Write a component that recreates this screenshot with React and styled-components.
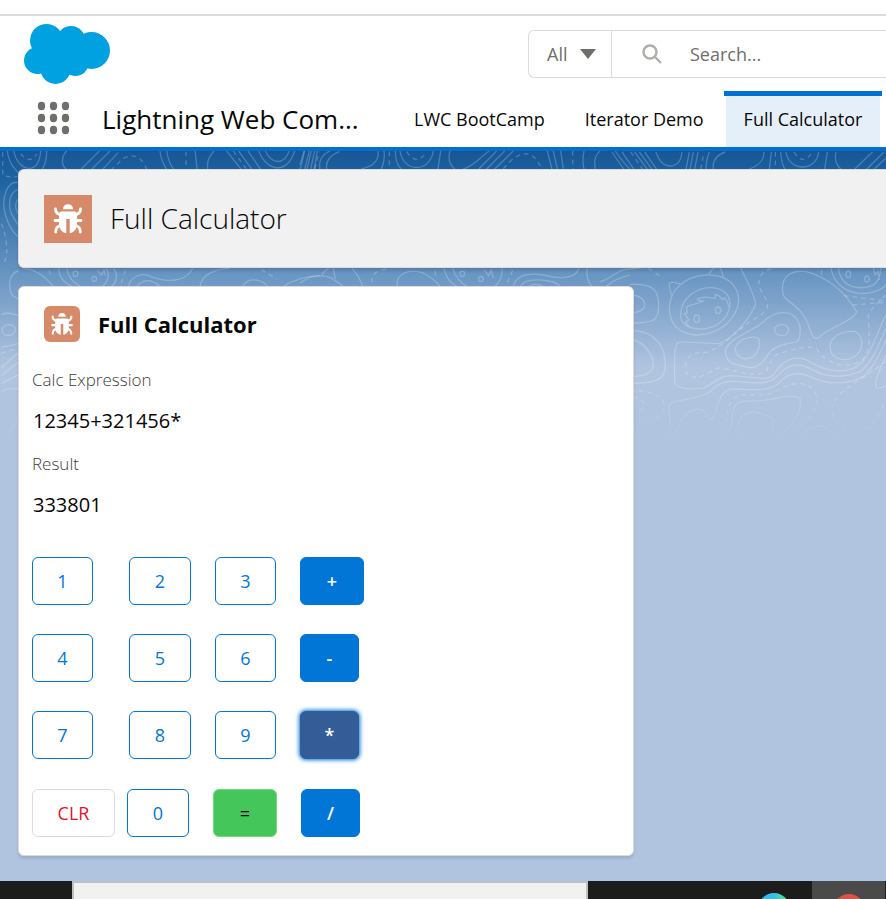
import React, { useState } from "react";
import styled, { createGlobalStyle, css } from "styled-components";

const GlobalStyle = createGlobalStyle`
  *, *::before, *::after { box-sizing: border-box; }
  body {
    margin: 0;
    background: #fff;
    color: #080707;
    font-family: "Open Sans", "Noto Sans", sans-serif;
    font-size: 18px;
  }
  h1, h2 { margin: 0; }
  button, input, select { font: inherit; }
`;

const Page = styled.div`
  display: flex;
  flex-direction: column;
  min-height: 100vh;
  overflow: hidden;
`;

const Header = styled.header`
  margin-top: 14px;
  border-top: 2px solid #dddbda;
  background: #fff;
`;

const TopRow = styled.div`
  display: flex;
  align-items: flex-start;
  justify-content: space-between;
  height: 75px;
  padding-left: 24px;
`;

const Logo = styled.svg`
  flex: none;
  width: 86px;
  height: 60px;
  margin-top: 8px;
  fill: #00a1e0;
`;

const SearchBox = styled.form`
  display: flex;
  width: 358px;
  height: 48px;
  margin-top: 14px;
  border: 1px solid #dddbda;
  border-right: 0;
  border-radius: 6px 0 0 6px;
  color: #706e6b;
`;

const ScopeField = styled.label`
  display: grid;
  flex: none;
  align-items: center;
  width: 83px;
  border-right: 1px solid #dddbda;

  > * {
    grid-area: 1 / 1;
  }
`;

const ScopeSelect = styled.select`
  appearance: none;
  width: 100%;
  height: 100%;
  padding: 0 0 0 18px;
  border: 0;
  background: transparent;
  color: inherit;
`;

const Caret = styled.svg`
  justify-self: end;
  width: 16px;
  height: 10px;
  margin-right: 15px;
  fill: #706e6b;
  pointer-events: none;
`;

const SearchField = styled.label`
  display: flex;
  flex: 1;
  align-items: center;
  gap: 28px;
  min-width: 0;
  padding-left: 30px;
`;

const SearchIcon = styled.svg`
  flex: none;
  width: 20px;
  height: 20px;
  fill: none;
  stroke: #b0adab;
  stroke-width: 2.4;
`;

const SearchInput = styled.input`
  flex: 1;
  min-width: 0;
  padding: 0;
  border: 0;
  outline: 0;
  background: transparent;

  &::placeholder {
    color: #706e6b;
    opacity: 1;
  }
`;

const NavRow = styled.nav`
  display: flex;
  height: 60px;
  padding-left: 37px;
  border-bottom: 4px solid #0070d2;
`;

const Launcher = styled.button`
  display: grid;
  place-items: center;
  flex: none;
  width: 33px;
  padding: 0 0 2px;
  border: 0;
  background: none;

  svg {
    width: 33px;
    height: 34px;
    fill: #706e6b;
  }
`;

const AppName = styled.span`
  flex: none;
  width: 324px;
  padding-left: 32px;
  font-size: 26px;
  line-height: 56px;
  white-space: nowrap;
`;

const Tab = styled.a`
  padding: 0 20px;
  border-top: 5px solid transparent;
  color: #080707;
  line-height: 46px;
  text-decoration: none;
  white-space: nowrap;

  ${(p) =>
    p.$active &&
    css`
      border-top-color: #0070d2;
      background: linear-gradient(#e5effa, #e5effa) no-repeat 2px 0 / calc(100% - 4px) 100%;
    `}
`;

const Stage = styled.div`
  display: grid;
  flex: 1;
  grid-template-columns: minmax(0, 1fr);
  background: #b0c4df
    linear-gradient(#195594 0, #1b5f9e 18px, #1f63a1 30px, #6e99c5 130px, #b0c4df 216px) no-repeat
    0 0 / 100% 216px;

  > * {
    grid-area: 1 / 1;
  }
`;

const Contours = styled.svg`
  width: 886px;
  height: 300px;
  fill: none;
  stroke: #fff;
  stroke-opacity: 0.22;
  stroke-width: 4;
  mask-image: linear-gradient(#000 230px, transparent 296px);

  .dash {
    stroke-dasharray: 14 12;
  }
`;

const Content = styled.main`
  z-index: 1;
  display: flex;
  flex-direction: column;
  gap: 18px;
  padding: 18px 0 25px 18px;
`;

const PageHeader = styled.header`
  display: flex;
  align-items: center;
  gap: 18px;
  padding: 25px 25px 24px;
  border: 1px solid #dddbda;
  border-right: 0;
  border-radius: 6px 0 0 6px;
  background: #f1f1f1;
  box-shadow: 0 3px 3px rgba(0, 0, 0, 0.12);
`;

const PageTitle = styled.h1`
  font-size: 28px;
  font-weight: 300;
  line-height: 46px;
  padding-bottom: 2px;
`;

const Card = styled.section`
  width: 100%;
  max-width: 616px;
  padding: 19px 13px 18px;
  border: 1px solid #dddbda;
  border-radius: 6px;
  background: #fff;
  box-shadow: 0 3px 3px rgba(0, 0, 0, 0.1);
`;

const CardHead = styled.header`
  display: flex;
  align-items: center;
  gap: 18px;
  padding-left: 12px;
`;

const CardTitle = styled.h2`
  font-size: 22px;
  font-weight: 700;
  line-height: 36px;
`;

const BugTile = styled.svg`
  flex: none;
  width: ${(p) => p.$size}px;
  height: ${(p) => p.$size}px;
  border-radius: ${(p) => p.$radius}px;
  background: #d68a6a;
  fill: #fff;

  .legs {
    fill: none;
    stroke: #fff;
    stroke-width: 2.8;
    stroke-linecap: round;
    stroke-linejoin: round;
  }
`;

const Readouts = styled.div`
  display: grid;
  gap: 17px;
  margin: 26px 0 38px;
`;

const Readout = styled.div`
  display: grid;
  gap: 15px;

  label {
    color: #3e3e3c;
    font-size: 17px;
    font-weight: 300;
    line-height: 24px;
  }

  output {
    min-height: 28px;
    padding-left: 1px;
    font-size: 20px;
    line-height: 28px;
  }
`;

const Keypad = styled.div`
  display: grid;
  gap: 29px;

  > :last-child {
    padding-top: 1px;
  }
`;

const KeyRow = styled.div`
  display: grid;
  grid-template-columns: ${(p) => p.$columns};
`;

const keyTones = {
  digit: css`
    border-color: #0176d7;
    background: #fff;
    color: #0176d7;
  `,
  operator: css`
    border-color: #0176d7;
    background: #0176d7;
    color: #fff;
    font-weight: 600;
  `,
  clear: css`
    border-color: #dddbda;
    background: #fff;
    color: #e8112d;
  `,
  equals: css`
    border-color: #74da7f;
    background: #45c65a;
    color: #080707;
  `,
};

const Key = styled.button`
  width: ${(p) => p.$width}px;
  height: 48px;
  padding: 0;
  border: 1px solid;
  border-radius: 6px;
  line-height: 46px;
  outline: 0;
  ${(p) => keyTones[p.$tone]}
  ${(p) =>
    p.$held &&
    css`
      border-color: #345c97;
      background: #345c97;
      box-shadow: 0 0 4px 1px #0176d7;
    `}
`;

const Taskbar = styled.footer`
  display: flex;
  height: 18px;
  padding-left: 72px;
  overflow: hidden;
  background: #1c1c1c;
`;

const TaskSearch = styled.div`
  width: 516px;
  border: solid #c0c0c0;
  border-width: 2px 2px 0;
  background: #f1f1f1;
`;

const TaskButton = styled.div`
  display: flex;
  justify-content: center;
  width: 73px;
  margin-left: ${(p) => p.$gap}px;
  padding-top: 12px;
  background: ${(p) => (p.$open ? "#4a4a4a" : "transparent")};

  svg {
    flex: none;
    width: 32px;
    height: 32px;
  }
`;

function Bug({ size, radius }) {
  return (
    <BugTile viewBox="0 0 48 48" $size={size} $radius={radius} aria-hidden="true">
      <path d="M19 14.200C19 11.200 21 9.300 24 9.300s5 1.900 5 4.900z" />
      <path d="M17.500 16.500h13c1.500 0 2.500 1 2.500 2.500v10.500c0 4.500-3 8-7.300 8.800V24h-3.400v14.300C18 37.500 15 34 15 29.500V19c0-1.500 1-2.500 2.500-2.500z" />
      <path
        className="legs"
        d="M11.500 14c0 3.200 1.500 5 5.500 5.800M36.500 14c0 3.200-1.500 5-5.500 5.800M11 25.500h6M31 25.500h6M11.700 37c0-4 1.300-5.800 4.800-6.500M36.300 37c0-4-1.300-5.800-4.800-6.500"
      />
    </BugTile>
  );
}

/* Topographic line art; each group is drawn at three units per pixel. */
function Topography() {
  return (
    <Contours viewBox="0 151 886 300" aria-hidden="true">
      <g transform="translate(0 145) scale(.33333)">
        <path d="M22 18C26 60 60 100 90 94C125 88 140 60 140 18M42 18C46 50 70 72 92 70C112 66 120 46 122 18M205 76C180 64 184 34 200 18M240 76L298 18M272 76L330 18M305 76L355 22M480 18C482 40 492 62 502 76M500 18C504 44 512 64 524 76M586 18C586 40 592 60 590 76M624 76C618 44 632 30 642 18M680 18L726 76M716 18L758 76M744 18L784 76M776 18C800 80 860 90 884 18M796 18C814 56 850 64 868 18M900 76L914 18M920 76L934 18M942 76L952 18" />
        <path className="dash" d="M8 22V90Q30 100 52 94M62 26C80 50 100 48 110 26M332 76L370 40Q408 20 432 56L442 76M558 20V76M700 18L742 76" />
        <path d="M54 112C20 108 8 160 12 190C18 230 36 258 54 276M54 134C28 140 24 180 34 206Q44 226 54 238M54 162Q40 184 54 206M54 378C24 388 26 425 34 446Q42 458 54 462M4 508Q28 500 54 512M6 556C8 534 46 534 46 554C44 576 8 578 6 556ZM4 606Q30 604 54 596" />
        <path className="dash" d="M4 236C16 262 22 300 20 330L10 362" />
        <path d="M70 372C100 370 130 390 160 424M176 370C176 400 194 414 216 424M200 370C204 396 222 414 240 424M318 370C332 390 322 410 308 424M340 370C356 388 350 410 336 424M386 424C390 398 420 382 446 392C500 416 560 410 578 370M410 424C430 402 454 402 480 424M600 424C604 388 650 370 690 370M728 424C740 400 780 396 802 424M852 424C880 404 920 394 960 392" />
        <path d="M220 386C218 376 234 376 234 386C232 398 218 398 220 386ZM276 402C276 392 290 392 290 402C288 412 276 412 276 402ZM292 376L304 390L312 376L316 392" />
        <path className="dash" d="M148 376L152 400M376 376L362 420M784 374L830 402" />
        <path d="M4 668L54 624M4 692L54 652M4 715L54 690M4 740Q28 726 54 732M20 880Q42 850 54 816" />
        <path className="dash" d="M4 625Q28 616 54 612" />
      </g>
      <g transform="translate(300 145) scale(.33333)">
        <path d="M0 60L12 18M14 72L28 18M32 72L44 18M60 72C54 44 70 26 90 18M80 72C76 44 92 30 118 20M184 72C220 64 238 46 234 18M244 72Q256 46 252 18M286 18C286 42 292 62 304 72M300 18C310 84 390 84 400 18M414 72L422 18M450 18C442 44 450 60 464 72M490 72C530 58 544 32 568 18M536 72L590 18M560 72L614 18M584 72L640 18M742 18L756 72M760 18L772 72M782 18L790 72M852 18Q846 46 852 72M886 72C880 44 888 28 900 18M946 18Q970 54 990 72" />
        <path className="dash" d="M44 72L58 20M268 20V72M320 20Q350 66 380 20M610 72C650 20 690 14 710 46L728 72M818 18V72" />
        <path d="M0 414C30 392 60 386 96 400L130 424M64 392Q74 376 86 370M100 370L106 402M156 370Q178 394 188 424M292 424C286 384 330 370 370 384Q406 404 420 424M432 370C440 400 450 414 470 424M458 370C466 396 480 412 500 424M606 370C608 394 598 412 586 424M640 424C650 386 690 384 730 390C780 404 830 400 836 370M662 424C674 400 710 402 746 408Q770 412 780 424M688 424Q706 412 730 424M862 370C858 398 864 412 876 424M920 424C950 396 970 398 990 390" />
        <path d="M480 386C480 376 494 376 494 386C492 398 480 398 480 386ZM536 402C536 392 550 392 550 402C548 412 536 412 536 402ZM552 374L566 392L574 376L580 400" />
        <path className="dash" d="M216 412V394Q230 376 260 372M404 378L410 402M638 376L620 418" />
      </g>
      <g transform="translate(600 140) scale(.33333)">
        <path d="M36 36Q50 58 72 88M66 36L102 88M104 36L142 88M118 36L156 88M134 36L170 88M168 36C176 60 190 78 212 78C236 76 244 58 246 36M258 88L268 36M270 88L280 36M284 88L294 36M318 88Q318 60 328 36M340 88C336 60 350 45 376 36M446 88C480 76 492 60 492 36M508 88L514 36M542 36C544 60 548 80 556 88M558 36C566 96 650 96 656 36M674 88L682 36M708 36C702 60 712 80 724 88M764 88Q796 56 818 36M800 88L852 36M822 88L858 54" />
        <path className="dash" d="M92 36L128 88M302 88L312 36M526 36V88M582 36Q608 80 638 36" />
      </g>
      <g transform="translate(640 265) scale(.33333)">
        <path d="M-120 50C-80 40 -70 12 -30 12L10 8" />
        <path d="M88 130C88 70 140 32 200 30C260 28 296 60 296 108C290 170 230 210 170 210C115 208 88 175 88 130ZM96 94C84 60 84 50 100 52L128 58M205 30C215 12 220 8 228 8M240 8Q248 22 250 38" />
        <path d="M122 150C122 100 170 66 215 68C250 70 270 90 270 118C266 165 225 192 180 192C140 190 122 175 122 150ZM150 186L136 172L146 165L134 146L142 144L140 126C155 115 175 118 190 108C180 108 170 106 172 102C190 92 210 98 226 100V88Q240 92 248 104L252 98Q262 104 266 126" />
        <ellipse cx="170" cy="161" rx="8" ry="11" />
        <ellipse cx="234" cy="136" rx="8" ry="10" />
        <path d="M302 8C320 50 350 100 346 120C330 160 270 234 230 236C180 232 140 230 115 232C100 240 104 300 104 350C110 375 150 372 190 370C230 350 240 332 270 332C330 334 380 350 400 330C430 284 460 270 500 285C540 310 590 330 640 310C690 290 710 200 738 150" />
        <path d="M90 530C92 470 86 440 88 420C100 400 180 405 210 380C240 350 260 348 290 350C340 352 380 362 410 335C440 300 470 290 510 310C560 340 610 340 660 320C700 290 720 230 738 190" />
        <path d="M150 532Q112 530 110 500C120 460 150 420 190 436C205 460 212 470 222 456C235 420 240 370 280 372C350 376 400 378 420 350C450 320 480 320 510 335C560 360 620 360 670 335C710 300 730 240 738 225" />
        <path d="M205 532C260 530 270 510 276 460C280 420 290 408 320 408C400 412 450 380 480 400C490 450 440 490 405 532M290 520C290 460 310 440 340 440C380 450 405 455 398 470V530" />
        <path d="M256 260C260 220 330 205 370 170C400 140 440 135 465 155C490 180 480 225 470 230C430 240 400 240 380 275C350 320 320 308 300 302C270 295 256 280 256 260ZM286 250C290 225 330 210 355 220C366 235 350 270 340 275C310 290 286 275 286 250Z" />
        <ellipse cx="425" cy="195" rx="21" ry="17" />
        <path d="M428 70C425 30 460 14 500 20C570 40 620 90 650 140C640 170 560 190 540 215C520 230 515 205 508 190C490 120 430 110 428 85ZM570 245C570 215 610 195 645 200C670 210 672 250 650 270C620 295 570 285 570 245Z" />
        <path d="M572 8C590 100 700 100 738 60M595 8C600 60 640 70 670 68C700 66 722 50 722 8M700 8L705 30L714 20L718 45" />
        <ellipse cx="625" cy="28" rx="7" ry="10" />
        <ellipse cx="681" cy="42" rx="7" ry="9" />
        <path d="M-30 58C40 56 56 75 56 120C56 170 40 174 -30 174M-30 90C0 90 14 105 14 118Q14 142 -30 144M-30 196C50 196 76 250 76 300C76 350 40 355 -30 355M-30 222C20 230 40 280 40 300C38 325 15 335 -30 335M738 270C720 310 700 360 708 368Q724 372 738 362M470 530C500 490 540 470 560 490Q590 510 610 528M668 528C672 512 700 512 716 528" />
        <path
          className="dash"
          d="M258 500C258 430 270 390 310 390C360 390 390 392 420 372C460 350 500 350 520 375C560 430 490 470 440 530M394 12C350 20 350 60 370 90C395 120 380 140 350 158C290 190 260 240 200 262C140 260 130 290 140 325C170 355 200 320 240 308C300 320 350 340 380 318C390 290 400 268 430 262C470 250 510 240 530 252C560 300 620 310 660 290C700 260 685 200 685 150C700 120 715 115 738 90M545 15V40M612 92L738 108M638 120L738 112M25 10L70 40M-30 378C50 375 76 400 72 430C60 460 30 478 -30 480M-20 395Q12 405 14 422Q8 436 -10 445M738 288C680 340 570 380 575 440C590 490 630 510 665 500C700 480 720 440 738 410"
        />
      </g>
    </Contours>
  );
}

const rows = [
  { columns: "97px 86px 85px auto", keys: [["1", "digit", 61], ["2", "digit", 62], ["3", "digit", 61], ["+", "operator", 64]] },
  { columns: "97px 86px 85px auto", keys: [["4", "digit", 61], ["5", "digit", 62], ["6", "digit", 61], ["-", "operator", 59]] },
  { columns: "97px 86px 85px auto", keys: [["7", "digit", 61], ["8", "digit", 62], ["9", "digit", 61], ["*", "operator", 59]] },
  { columns: "95px 86px 88px auto", keys: [["CLR", "clear", 83], ["0", "digit", 62], ["=", "equals", 64], ["/", "operator", 59]] },
];

const operations = {
  "+": (a, b) => a + b,
  "-": (a, b) => a - b,
  "*": (a, b) => a * b,
  "/": (a, b) => a / b,
};

function evaluate(expression) {
  const tokens = expression.match(/\d+|[-+*/]/g) || [];
  let total = Number(tokens[0]) || 0;
  for (let i = 1; i + 1 < tokens.length; i += 2) {
    const apply = operations[tokens[i]];
    if (apply) total = apply(total, Number(tokens[i + 1]) || 0);
  }
  return String(total);
}

function Calculator() {
  const [expression, setExpression] = useState("12345+321456*");
  const [result, setResult] = useState("333801");
  const [last, setLast] = useState("*");

  const press = (key, tone) => {
    setLast(key);
    if (tone === "clear") {
      setExpression("");
      setResult("");
      return;
    }
    if (tone !== "digit") setResult(evaluate(expression));
    if (tone !== "equals") setExpression(expression + key);
  };

  return (
    <Card>
      <CardHead>
        <Bug size={36} radius={6} />
        <CardTitle>Full Calculator</CardTitle>
      </CardHead>
      <Readouts>
        <Readout>
          <label htmlFor="expression">Calc Expression</label>
          <output id="expression">{expression}</output>
        </Readout>
        <Readout>
          <label htmlFor="result">Result</label>
          <output id="result">{result}</output>
        </Readout>
      </Readouts>
      <Keypad>
        {rows.map((row) => (
          <KeyRow key={row.keys[0][0]} $columns={row.columns}>
            {row.keys.map(([label, tone, width]) => (
              <Key
                key={label}
                type="button"
                $tone={tone}
                $width={width}
                $held={tone === "operator" && last === label}
                onClick={() => press(label, tone)}
              >
                {label}
              </Key>
            ))}
          </KeyRow>
        ))}
      </Keypad>
    </Card>
  );
}

export default function App() {
  return (
    <Page>
      <GlobalStyle />
      <Header>
        <TopRow>
          <Logo viewBox="0 0 86 60" role="img" aria-label="Salesforce">
            <circle cx="22.500" cy="16.500" r="16.500" />
            <circle cx="47" cy="16" r="14" />
            <circle cx="67.500" cy="26.500" r="18.500" />
            <circle cx="13.500" cy="36.500" r="13.500" />
            <circle cx="31.500" cy="45" r="15" />
            <circle cx="51.500" cy="39" r="13" />
            <path d="M12 24L30 12L50 14L66 26L56 44L34 50L16 44z" />
          </Logo>
          <SearchBox role="search" onSubmit={(e) => e.preventDefault()}>
            <ScopeField>
              <ScopeSelect aria-label="Search scope">
                <option>All</option>
              </ScopeSelect>
              <Caret viewBox="0 0 16 10">
                <path d="M0 0h16L8 10z" />
              </Caret>
            </ScopeField>
            <SearchField>
              <SearchIcon viewBox="0 0 20 20">
                <circle cx="8" cy="8" r="6.500" />
                <path d="M12.500 12.500L19 19" />
              </SearchIcon>
              <SearchInput type="search" placeholder="Search..." aria-label="Search" />
            </SearchField>
          </SearchBox>
        </TopRow>
        <NavRow>
          <Launcher type="button" aria-label="App Launcher">
            <svg viewBox="0 0 33 34">
              {[5, 17, 29].map((y) =>
                [4.5, 16.5, 28.5].map((x) => <ellipse key={`${x}-${y}`} cx={x} cy={y} rx="3.700" ry="4.200" />)
              )}
            </svg>
          </Launcher>
          <AppName>Lightning Web Com...</AppName>
          <Tab href="#bootcamp">LWC BootCamp</Tab>
          <Tab href="#iterator">Iterator Demo</Tab>
          <Tab href="#calculator" $active aria-current="page">
            Full Calculator
          </Tab>
        </NavRow>
      </Header>
      <Stage>
        <Topography />
        <Content>
          <PageHeader>
            <Bug size={48} radius={0} />
            <PageTitle>Full Calculator</PageTitle>
          </PageHeader>
          <Calculator />
        </Content>
      </Stage>
      <Taskbar>
        <TaskSearch />
        <TaskButton $gap={149}>
          <svg viewBox="0 0 32 32">
            <defs>
              <linearGradient id="wave">
                <stop offset="0.500" stopColor="#35bdea" />
                <stop offset="0.800" stopColor="#4fdc96" />
              </linearGradient>
            </defs>
            <circle cx="16" cy="16" r="16" fill="url(#wave)" />
          </svg>
        </TaskButton>
        <TaskButton $gap={2} $open>
          <svg viewBox="0 0 32 32">
            <circle cx="16" cy="17" r="16" fill="#de5246" />
          </svg>
        </TaskButton>
      </Taskbar>
    </Page>
  );
}
